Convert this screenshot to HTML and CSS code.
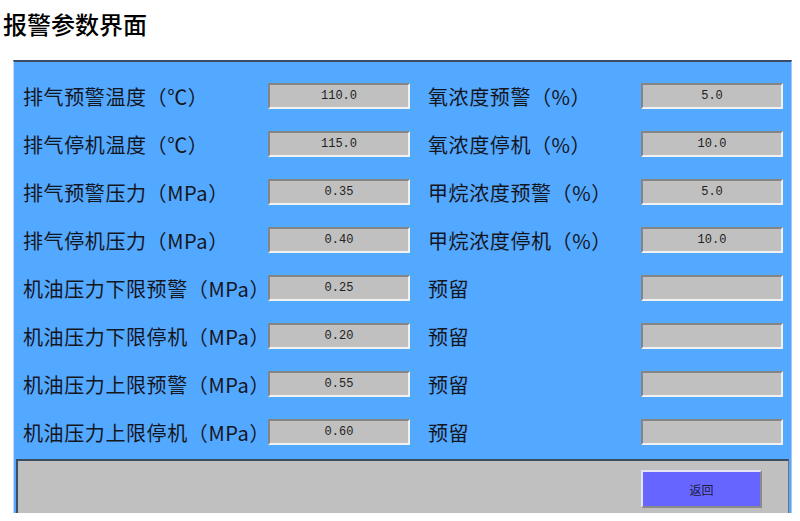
FILE: index.html
```html
<!DOCTYPE html>
<html lang="zh">
<head>
<meta charset="utf-8">
<title>报警参数界面</title>
<link rel="stylesheet" href="styles.css">
</head>
<body>
<header class="title">报警参数界面</header>
<main class="panel">
  <section class="grid">
    <div class="label">排气预警温度（℃）</div><div class="box">110.0</div>
    <div class="label">氧浓度预警（%）</div><div class="box">5.0</div>
    <div class="label">排气停机温度（℃）</div><div class="box">115.0</div>
    <div class="label">氧浓度停机（%）</div><div class="box">10.0</div>
    <div class="label">排气预警压力（MPa）</div><div class="box">0.35</div>
    <div class="label">甲烷浓度预警（%）</div><div class="box">5.0</div>
    <div class="label">排气停机压力（MPa）</div><div class="box">0.40</div>
    <div class="label">甲烷浓度停机（%）</div><div class="box">10.0</div>
    <div class="label">机油压力下限预警（MPa）</div><div class="box">0.25</div>
    <div class="label">预留</div><div class="box"></div>
    <div class="label">机油压力下限停机（MPa）</div><div class="box">0.20</div>
    <div class="label">预留</div><div class="box"></div>
    <div class="label">机油压力上限预警（MPa）</div><div class="box">0.55</div>
    <div class="label">预留</div><div class="box"></div>
    <div class="label">机油压力上限停机（MPa）</div><div class="box">0.60</div>
    <div class="label">预留</div><div class="box"></div>
  </section>
  <footer class="footer">
    <button class="back">返回</button>
  </footer>
</main>
</body>
</html>
```
FILE: styles.css
```css
* { box-sizing: border-box; }
html, body {
  margin: 0;
  padding: 0;
  background: #ffffff;
  font-family: "Noto Sans CJK SC", "Noto Sans", sans-serif;
}
.title {
  height: 60px;
  line-height: 48px;
  padding-left: 3px;
  font-size: 24px;
  font-weight: 500;
  color: #000;
}
.panel {
  margin-left: 13px;
  width: 779px;
  height: 453px;
  background: #53a8ff;
  border-top: 2px solid #3c4a66;
  border-left: 1px solid #c8d8ee;
  border-right: 1px solid #a9c6ec;
  display: flex;
  flex-direction: column;
  padding: 0 2px 0 2px;
}
.grid {
  display: grid;
  grid-template-columns: 245px 142px 231px 142px;
  grid-auto-rows: 48px;
  column-gap: 0;
  padding: 10px 0 0 7px;
  height: 396px;
}
.label {
  display: flex;
  align-items: center;
  font-size: 20px;
  letter-spacing: 0.6px;
  color: #14161e;
  white-space: nowrap;
}
.grid .label:nth-child(4n+3) {
  padding-left: 18px;
}
.box {
  align-self: center;
  height: 26px;
  background: #c0c0c0;
  border-top: 2px solid #858585;
  border-left: 2px solid #858585;
  border-bottom: 2px solid #f2f2f2;
  border-right: 2px solid #f2f2f2;
  display: flex;
  align-items: center;
  justify-content: center;
  font-family: "Liberation Mono", "DejaVu Sans Mono", monospace;
  font-size: 12px;
  color: #222;
}
.footer {
  margin-top: 1px;
  flex: 1;
  background: #c0c0c0;
  border-top: 2px solid #3d4d60;
  border-left: 2px solid #3d4d60;
  border-right: 1px solid #707070;
  display: flex;
  justify-content: flex-end;
  align-items: flex-start;
  padding: 9px 26px 0 0;
}
.back {
  width: 121px;
  height: 38px;
  background: #6666ff;
  border-top: 2px solid #e4e4f4;
  border-left: 2px solid #e4e4f4;
  border-bottom: 2px solid #8a8a8a;
  border-right: 2px solid #8a8a8a;
  font-family: "Noto Sans CJK SC", sans-serif;
  font-size: 12px;
  color: #1c1c3a;
  padding: 0;
}
```
